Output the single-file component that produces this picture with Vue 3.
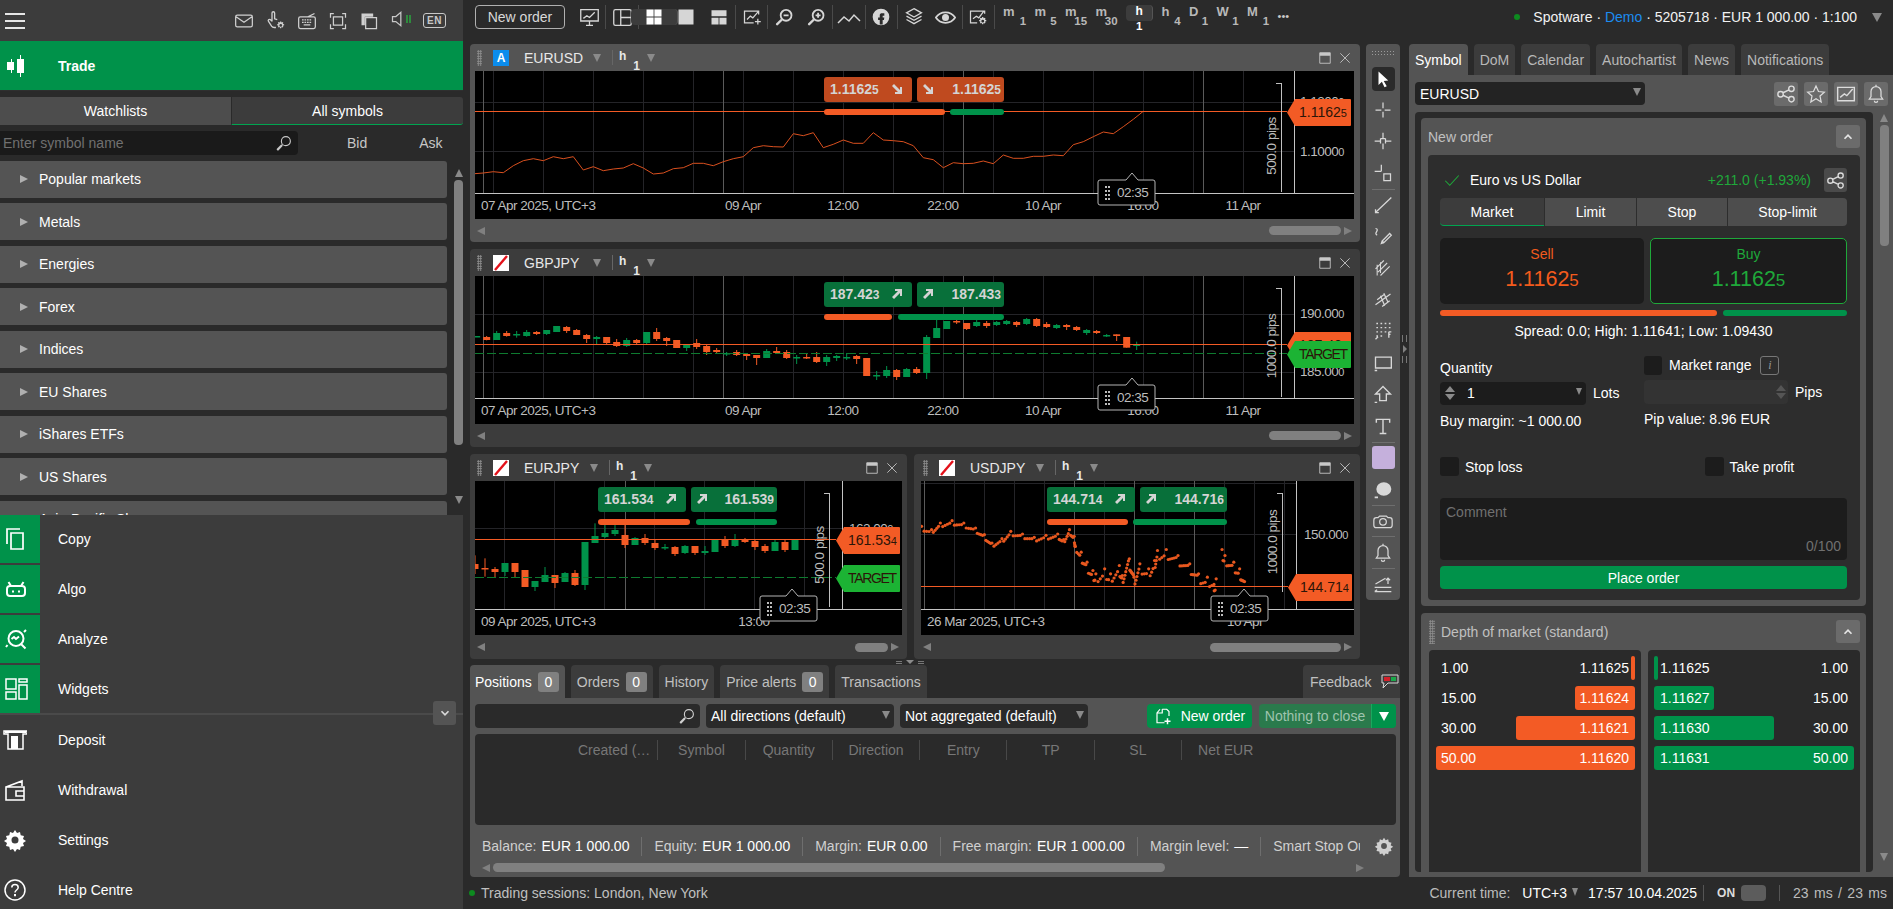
<template>
  <div class="app">
    <!-- left navigation -->
    <aside class="side">
      <div class="side-top">
        <span class="burger"><i></i><i></i><i></i></span>
        <div class="side-top-icons">
          <Icon name="mail" :size="20" />
          <Icon name="touch" :size="21" />
          <Icon name="keyboard" :size="20" />
          <Icon name="fullscreen" :size="20" />
          <Icon name="windows" :size="20" />
          <span class="sound"><Icon name="sound" :size="20" /></span>
          <span class="lang">EN</span>
        </div>
      </div>
      <div class="side-trade">
        <span class="side-ico"><Icon name="candles" :size="24" /></span>
        <b>Trade</b>
      </div>
      <div class="market">
        <div class="market-tabs">
          <div class="mtab">Watchlists</div>
          <div class="mtab active">All symbols</div>
        </div>
        <div class="market-search">
          <div class="search-box">
            <span>Enter symbol name</span>
            <Icon name="search" :size="18" />
          </div>
          <span class="bid">Bid</span>
          <span class="ask">Ask</span>
        </div>
        <div class="market-list">
          <div class="rows">
            <div v-for="r in markets" :key="r" class="mrow"><em class="tri-r"></em>{{ r }}</div>
          </div>
          <div class="vscroll">
            <em class="tri-u"></em>
            <div class="thumb"></div>
            <em class="tri-d"></em>
          </div>
        </div>
      </div>
      <div class="side-menu">
        <div v-for="m in greenMenu" :key="m.label" class="gm">
          <span class="gm-ico"><Icon :name="m.icon" :size="24" /></span>
          <span>{{ m.label }}</span>
        </div>
        <div class="side-div"></div>
        <div v-for="m in plainMenu" :key="m.label" class="pm">
          <span class="pm-ico"><Icon :name="m.icon" :size="24" /></span>
          <span>{{ m.label }}</span>
        </div>
        <button class="side-collapse"><Icon name="chevDown" :size="14" /></button>
      </div>
    </aside>

    <div class="main">
      <!-- top toolbar -->
      <header class="toolbar">
        <button class="new-order">New order</button>
        <div class="tool-strip">
          <span
            v-for="t in toolbarIcons"
            :key="t.icon"
            class="tb"
            :class="{ sep: t.sep }"
          >
            <span class="tb-in" :class="{ on: t.on }"><Icon :name="t.icon" :size="t.size || 20" /></span>
          </span>
        </div>
        <div class="tfs">
          <span
            v-for="t in timeframes"
            :key="t.l + t.n"
            class="tf"
            :class="{ on: t.on }"
            :style="{ width: t.w + 'px' }"
          >
            <b>{{ t.l }}</b><b class="sub">{{ t.n }}</b>
          </span>
          <span class="dots">•••</span>
        </div>
        <div class="account">
          <i class="dot"></i>Spotware · <span class="demo">Demo</span> · 5205718 · EUR 1 000.00 · 1:100
          <em class="tri-d acc-tri"></em>
        </div>
      </header>

      <div class="body">
        <div class="center">
          <div class="workspace">
            <div class="charts">
              <section
                v-for="c in charts"
                :key="c.symbol"
                class="chart-panel"
                :class="[c.cls, { active: c.active }]"
              >
                <div class="chart-head">
                  <span class="grip"></span>
                  <span class="sym-ico" :class="{ auto: c.active }">
                    <template v-if="c.active">A</template>
                    <svg v-else width="16" height="16" viewBox="0 0 16 16"><path d="M2 15L14 1" stroke="#e3111a" stroke-width="2.4" /></svg>
                  </span>
                  <span class="sym-name">{{ c.symbol }}</span>
                  <em class="tri-d"></em>
                  <span class="head-sep"></span>
                  <span class="head-tf"><b>h</b><b class="sub">1</b></span>
                  <em class="tri-d"></em>
                  <span class="head-right">
                    <Icon name="maximize" :size="14" />
                    <Icon name="close" :size="14" />
                  </span>
                </div>
                <svg class="plot" :width="c.w" :height="c.h" :viewBox="`0 0 ${c.w} ${c.h}`">
                  <line v-for="y in c.hgrid" :key="'h' + y" x1="0" :x2="c.axisX" :y1="y" :y2="y" class="grid" />
                  <line v-for="x in c.vgrid" :key="'v' + x" :x1="x" :x2="x" y1="0" :y2="c.axisY" class="grid" />
                  <line v-for="x in c.sessions" :key="'s' + x" :x1="x" :x2="x" y1="0" :y2="c.axisY" class="session" />
                  <line :x1="c.axisX" :x2="c.axisX" y1="0" :y2="c.axisY" class="axis" />
                  <line x1="0" :x2="c.w" :y1="c.axisY" :y2="c.axisY" class="axis" />

                  <polyline v-if="c.line" :points="c.line" class="pline" />
                  <g v-if="c.candles">
                    <g v-for="(k, i) in c.candles" :key="i" :class="k.up ? 'cg' : 'co'">
                      <line :x1="k.x" :x2="k.x" :y1="k.wt" :y2="k.wb" />
                      <rect :x="k.x - 3.5" :y="k.top" width="7" :height="k.h" />
                    </g>
                  </g>
                  <g v-if="c.dots" class="scatter">
                    <circle v-for="(d, i) in c.dots" :key="i" :cx="d[0]" :cy="d[1]" r="1.6" />
                  </g>

                  <line x1="0" :x2="c.tagX" :y1="c.bidY" :y2="c.bidY" class="bid-line" />
                  <line v-if="c.targetY" x1="0" :x2="c.tagX" :y1="c.targetY" :y2="c.targetY" class="target-line" />

                  <text v-for="p in c.prices" :key="p.t" :x="c.priceX" :y="p.y + 5" class="ax">{{ p.t }}<tspan font-size="11">{{ p.s }}</tspan></text>
                  <text v-for="l in c.xLabels" :key="l.t" :x="l.x" :y="c.axisY + 17" class="ax" :text-anchor="l.a || 'middle'">{{ l.t }}</text>

                  <!-- distance ruler -->
                  <path :d="`M${c.ruler.x - 5} ${c.ruler.y1}H${c.ruler.x}V${c.ruler.y2}`" class="ruler" />
                  <text class="ax" text-anchor="middle" :transform="`translate(${c.ruler.x - 5} ${c.ruler.mid}) rotate(-90)`">{{ c.ruler.t }}</text>

                  <!-- price tags -->
                  <g v-for="g in c.tags" :key="g.t">
                    <path :d="tagPath(c.tagX, g.y)" :fill="g.fill" />
                    <text :x="c.tagX + 12" :y="g.y + 18" class="tag-text" :textLength="g.big ? 49 : null">{{ g.t }}<tspan font-size="11">{{ g.s }}</tspan></text>
                  </g>

                  <!-- quick trade buttons -->
                  <g class="quick">
                    <rect :x="c.sell.x" y="6" :width="c.sell.w" height="25" rx="3" :fill="c.btn" />
                    <text :x="c.sell.x + 6" y="23" class="q-text">{{ c.sell.t }}<tspan font-size="12">{{ c.sell.s }}</tspan></text>
                    <path :d="arrowPath(c.sell.x + c.sell.w - 15, 18, c.down)" class="q-arrow" />
                    <rect :x="c.buy.x" y="6" :width="c.buy.w" height="25" rx="3" :fill="c.btn" />
                    <text :x="c.buy.x + c.buy.w - 3" y="23" class="q-text" text-anchor="end">{{ c.buy.t }}<tspan font-size="12">{{ c.buy.s }}</tspan></text>
                    <path :d="arrowPath(c.buy.x + 11, 18, c.down)" class="q-arrow" />
                    <rect :x="c.sell.x" y="38" :width="c.sellBar" height="6" rx="3" class="bar-o" />
                    <rect :x="c.greenBar[0]" y="38" :width="c.greenBar[1]" height="6" rx="3" class="bar-g" />
                  </g>

                  <!-- candle countdown -->
                  <g :transform="`translate(${c.timer} ${c.axisY - 13})`">
                    <path :d="timerPath(c.timerArrow)" class="timer" />
                    <g class="timer-grip">
                      <rect v-for="d in timerDots" :key="d[0] + '-' + d[1]" :x="d[0]" :y="d[1]" width="2" height="2" />
                    </g>
                    <text x="19" y="17" class="ax">02:35</text>
                  </g>
                </svg>
                <div class="chart-scroll">
                  <em class="tri-l"></em>
                  <span class="cs-track"><span class="cs-thumb" :style="{ width: c.thumb + 'px' }"></span></span>
                  <em class="tri-r"></em>
                </div>
              </section>
            </div>

            <div class="draw-tools">
              <div class="tools-grip"></div>
              <button class="cursor-tool"><Icon name="cursor" :size="18" /></button>
              <div v-for="t in drawTools" :key="t.icon" class="dtool" :class="{ sep: t.sep }">
                <span v-if="t.icon === 'swatch'" class="swatch"></span>
                <Icon v-else :name="t.icon" :size="20" />
              </div>
            </div>
          </div>

          <div class="split-h"><i></i><em class="tri-d"></em><i></i></div>

          <!-- positions panel -->
          <section class="bottom">
            <div class="btabs">
              <div v-for="t in bottomTabs" :key="t.label" class="btab" :class="{ active: t.active }">
                {{ t.label }}<span v-if="t.badge !== undefined" class="badge">{{ t.badge }}</span>
              </div>
              <div class="btab feedback">
                Feedback
                <svg width="18" height="16" viewBox="0 0 18 16">
                  <path d="M1 1h16v8H7l-5 5 1-5H1z" fill="none" stroke="#d8d8d8" stroke-width="1" />
                  <rect x="3" y="3" width="6" height="4" fill="#d3202a" />
                  <rect x="10" y="3" width="5" height="4" fill="#1aa84a" />
                </svg>
              </div>
            </div>
            <div class="bpanel">
              <div class="filters">
                <div class="f-search"><Icon name="search" :size="18" /></div>
                <div class="f-select">All directions (default)<em class="tri-d"></em></div>
                <div class="f-select">Not aggregated (default)<em class="tri-d"></em></div>
                <button class="f-new"><Icon name="newDoc" :size="18" />New order</button>
                <div class="f-close">
                  <span>Nothing to close</span>
                  <i><em class="tri-d white"></em></i>
                </div>
              </div>
              <div class="table">
                <div class="thead">
                  <span v-for="h in columns" :key="h">{{ h }}</span>
                </div>
              </div>
              <div class="summary">
                <div class="sum-items">
                  <span v-for="s in summary" :key="s.label" class="sum">
                    {{ s.label }}<b v-if="s.value">{{ s.value }}</b>
                  </span>
                </div>
                <Icon name="gear" :size="20" />
              </div>
              <div class="hscroll">
                <em class="tri-l"></em>
                <span class="hs-track"><span class="hs-thumb"></span></span>
                <em class="tri-r"></em>
              </div>
            </div>
          </section>
        </div>

        <div class="split-v"><i></i><em class="tri-r"></em><i></i></div>

        <!-- symbol panel -->
        <section class="right">
          <div class="rtabs">
            <div v-for="(t, i) in rightTabs" :key="t" class="rtab" :class="{ active: i === 0 }">{{ t }}</div>
          </div>
          <div class="rpanel">
            <div class="sym-bar">
              <div class="sym-select">EURUSD<em class="tri-d"></em></div>
              <div class="sym-btns">
                <button><Icon name="share" :size="20" /></button>
                <button><Icon name="star" :size="20" /></button>
                <button><Icon name="chartBox" :size="20" /></button>
                <button><Icon name="bell" :size="20" /></button>
              </div>
            </div>
            <div class="rcontent">
              <div class="rcards">
                <div class="card">
                  <div class="card-head">
                    <span>New order</span>
                    <button class="collapse"><Icon name="chevUp" :size="14" /></button>
                  </div>
                  <div class="order">
                    <div class="o-title">
                      <Icon name="check" :size="18" />
                      <span class="o-name">Euro vs US Dollar</span>
                      <span class="o-change">+211.0 (+1.93%)</span>
                      <button class="o-share"><Icon name="share" :size="19" /></button>
                    </div>
                    <div class="o-tabs">
                      <div class="active">Market</div>
                      <div>Limit</div>
                      <div>Stop</div>
                      <div>Stop-limit</div>
                    </div>
                    <div class="o-prices">
                      <div class="pbox sell">
                        <span>Sell</span>
                        <strong>1.1162<small>5</small></strong>
                      </div>
                      <div class="pbox buy">
                        <span>Buy</span>
                        <strong>1.1162<small>5</small></strong>
                      </div>
                    </div>
                    <div class="o-bars"><i class="b-o"></i><i class="b-g"></i></div>
                    <div class="o-spread">Spread: 0.0; High: 1.11641; Low: 1.09430</div>
                    <div class="o-form">
                      <div class="col-l">
                        <label>Quantity</label>
                        <div class="qty-row">
                          <div class="qty"><span class="spin"></span><span class="qty-val">1</span><em class="tri-d"></em></div>
                          <span>Lots</span>
                        </div>
                        <p>Buy margin: ~1 000.00</p>
                      </div>
                      <div class="col-r">
                        <div class="range"><span class="cb"></span>Market range<span class="info">i</span></div>
                        <div class="qty-row">
                          <div class="pips"><span class="spin"></span></div>
                          <span>Pips</span>
                        </div>
                        <p>Pip value: 8.96 EUR</p>
                      </div>
                    </div>
                    <div class="o-checks">
                      <div class="chk"><span class="cb"></span>Stop loss</div>
                      <div class="chk tp"><span class="cb"></span>Take profit</div>
                    </div>
                    <div class="comment">
                      <span>Comment</span>
                      <span class="count">0/100</span>
                    </div>
                    <button class="place">Place order</button>
                  </div>
                </div>
                <div class="card dom">
                  <div class="card-head">
                    <span class="grip"></span>
                    <span class="dom-title">Depth of market (standard)</span>
                    <button class="collapse"><Icon name="chevUp" :size="14" /></button>
                  </div>
                  <div class="dom-cols">
                    <div class="dom-col">
                      <div v-for="r in domSell" :key="r.price" class="dom-row sell">
                        <i :style="{ width: r.bar + 'px' }"></i>
                        <span>{{ r.qty }}</span><span>{{ r.price }}</span>
                      </div>
                    </div>
                    <div class="dom-col">
                      <div v-for="r in domBuy" :key="r.price" class="dom-row buy">
                        <i :style="{ width: r.bar + 'px' }"></i>
                        <span>{{ r.price }}</span><span>{{ r.qty }}</span>
                      </div>
                    </div>
                  </div>
                </div>
              </div>
              <div class="vscroll wide">
                <em class="tri-u"></em>
                <div class="thumb"></div>
                <em class="tri-d"></em>
              </div>
            </div>
          </div>
        </section>
      </div>

      <footer class="status">
        <i class="dot"></i>
        <span class="sessions">Trading sessions: London, New York</span>
        <div class="status-right">
          <span class="muted">Current time:</span>
          <span class="utc">UTC+3<em class="tri-d"></em></span>
          <span class="clock">17:57 10.04.2025</span>
          <span class="on"><b>ON</b><i></i></span>
          <span class="muted ms">23 ms / 23 ms</span>
        </div>
      </footer>
    </div>
  </div>
</template>

<script setup>
import { h } from 'vue'

const icons = {
  mail: { s: 'M4 5h16a2 2 0 0 1 2 2v10a2 2 0 0 1-2 2H4a2 2 0 0 1-2-2V7a2 2 0 0 1 2-2z M2.5 7l9.5 6.5L21.500 7' },
  touch: { s: 'M8 13V3.500a1.500 1.500 0 0 1 3 0V10l3 1 M8 13l-2-2c-1.500-1-3 .5-2 2l3.500 5.500c.7 1 1.500 1.500 3 1.500h2', f: 'M17.500 13l1 0 .4 1.400 1.300-.6.800.8-.6 1.300 1.500.4v1.200l-1.500.4.6 1.300-.8.8-1.300-.6-.4 1.500h-1.200l-.4-1.500-1.300.6-.8-.8.6-1.300-1.500-.4v-1.200l1.500-.4-.6-1.300.8-.8 1.300.6.4-1.400zM18 16a1.600 1.600 0 1 0 0 3.200 1.600 1.600 0 0 0 0-3.200z' },
  keyboard: { s: 'M4 7h16a2 2 0 0 1 2 2v10a2 2 0 0 1-2 2H4a2 2 0 0 1-2-2V9a2 2 0 0 1 2-2z M13 7l8-4', f: 'M6 10h2v1.500H6zM9 10h2v1.500H9zM12 10h2v1.500h-2zM15 10h2v1.500h-2zM6 13h2v1.500H6zM9 13h2v1.500H9zM12 13h2v1.500h-2zM15 13h2v1.500h-2zM8 16h8v1.500H8z' },
  fullscreen: { s: 'M3 8V3h4 M17 3h4v5 M21 16v5h-4 M7 21H3v-5 M6.500 7h11v10h-11z' },
  windows: { s: 'M8 8h13v13H8z', f: 'M3 3h14v4H7v10H3z' },
  sound: { s: 'M3 9h4l6-5v16l-6-5H3z' },
  candles: { f: 'M7 5h1v3h2v8H8v3H7v-3H3V8h4zM16 1h1v4h3v14h-3v4h-1v-4h-3V5h3z' },
  search: { s: 'M14.500 3.500a6 6 0 1 0 0 12 6 6 0 0 0 0-12z', f: 'M8.500 13.500l2 2-6 6.500c-1 .8-3-1-2-2.200z' },
  copy: { s: 'M7 6h12v16H7z M3 17V2h13', w: 1.700 },
  algo: { s: 'M6 9h12a3 3 0 0 1 3 3v4a3 3 0 0 1-3 3H6a3 3 0 0 1-3-3v-4a3 3 0 0 1 3-3z M7 9L4.500 5 M17 9l2.500-4 M8 14.500h2 M14 14.500h2', w: 2 },
  analyze: { s: 'M12 4a7.500 7.500 0 1 0 0 15 7.500 7.500 0 0 0 0-15z M17.500 17.500l4 4 M7.500 12l2.500-2 2 2 3-2.500 M2 20l1.500-2 M20 5l2-2', w: 2 },
  widgets: { s: 'M2 2h10v10H2z M15 2h8v3h-8z M15 8h8v14h-8z M2 15h10v7H2z' },
  deposit: { s: 'M1 3h23v3H20v15H5V6H1z', f: 'M8 8h7v13H8zM2 3h21v2H2z' },
  wallet: { s: 'M3 9h18v13H3z M3 9l16-6v5 M13 13h8v5h-8z', w: 1.600 },
  gear: { f: 'M12 2l2 3 3-1 .7 3.300 3.300.7-1 3 3 2-3 2 1 3-3.300.7L17 22l-3-1-2 3-2-3-3 1-.7-3.300L3 18l1-3-3-2 3-2-1-3 3.300-.7L7 4l3 1zm0 6.500a3.500 3.500 0 1 0 0 7 3.500 3.500 0 0 0 0-7z' },
  help: { s: 'M12 2a10 10 0 1 0 0 20 10 10 0 0 0 0-20z M8.800 9.500c0-4 6.400-4 6.400 0 0 2.500-3.200 2.500-3.200 5', f: 'M11 16h2v2.200h-2z', w: 1.500 },
  chevDown: { s: 'M6 9l6 6 6-6', w: 3 },
  chevUp: { s: 'M6 15l6-6 6 6', w: 3 },
  monitor: { s: 'M2 3h20v13H2z M8 21h8 M12 16v5 M5 13l4-3 3 2 6-6', w: 1.500 },
  layout: { s: 'M4 3h16a2 2 0 0 1 2 2v14a2 2 0 0 1-2 2H4a2 2 0 0 1-2-2V5a2 2 0 0 1 2-2z M10 3v18 M10 12h12' },
  grid4: { f: 'M3 3h8.500v8.500H3zM12.500 3H21v8.500h-8.500zM3 12.500h8.500V21H3zM12.500 12.500H21V21h-8.500z' },
  square: { f: 'M3 3h18v18H3z' },
  tpl: { f: 'M3 4h18v7H3zM3 13h8.500v8H3zM12.500 13H21v8h-8.500z' },
  chartPlus: { s: 'M20 9v-4H3v14h11 M6 15l4-4 3 2 7-8 M19 14v7 M15.500 17.500h7' },
  zoomOut: { s: 'M14.500 3.500a6.500 6.500 0 1 0 0 13 6.500 6.500 0 0 0 0-13z M11.500 10h6', f: 'M8.500 14l2 2-6 6c-1 .8-3-1-2-2.200z', w: 2.200 },
  zoomIn: { s: 'M14.500 3.500a6.500 6.500 0 1 0 0 13 6.500 6.500 0 0 0 0-13z M11.500 10h6 M14.500 7v6', f: 'M8.500 14l2 2-6 6c-1 .8-3-1-2-2.200z', w: 2.200 },
  lineChart: { s: 'M1 18l6-6 5 4 5-6 6 6' },
  fb: { f: 'M12 2a10 10 0 1 0 0 20 10 10 0 0 0 0-20zm1.500 5.500h2.500v3h-2v2h2l-.5 3h-1.500V21h-3.500v-5.500h-2v-3h2V10c0-1.800 1-2.500 3-2.500z' },
  layers: { s: 'M12 2l9 5-9 5-9-5z M3 11l9 5 9-5 M3 15l9 5 9-5' },
  eye: { s: 'M1 12c5-8 17-8 22 0-5 8-17 8-22 0z', f: 'M12 8a4 4 0 1 0 0 8 4 4 0 0 0 0-8z', w: 2 },
  chartGear: { s: 'M20 8V5H3v14h8 M6 14l4-3 3 2 6-8', f: 'M17 12l1.300 0 .4 1.500 1.300-.6 1 1-.6 1.300 1.500.4v1.400l-1.500.4.6 1.300-1 1-1.300-.6-.4 1.500H17l-.4-1.500-1.300.6-1-1 .6-1.300-1.500-.4v-1.400l1.500-.4-.6-1.300 1-1 1.300.6zm.7 3.300a1.700 1.700 0 1 0 0 3.400 1.700 1.700 0 0 0 0-3.400z' },
  maximize: { s: 'M3 3h18v18H3z', f: 'M3 3h18v5H3z' },
  close: { s: 'M4 4l16 16 M20 4L4 20', w: 1.500 },
  cursor: { f: 'M6 2l13 12-6 .5 4 7-3 1.500-3.500-7.500L6 20z' },
  cross: { s: 'M12 3v7 M12 14v7 M3 12h7 M14 12h7' },
  crossDense: { s: 'M12 2v7 M12 15v7 M2 12h7 M15 12h7 M9 9v6 M15 9v6 M9 9h6' },
  crossBox: { s: 'M10 2v8 M2 10h8 M13 13h8v8h-8z' },
  trendLine: { s: 'M3 21L22 3 M3 17v4h4' },
  pen: { s: 'M13 20l-2-2 9-9 2 2z M11 18l-1 3 3-1 M3 3c6 1-3 6 2 8' },
  fib: { s: 'M3 13L13 3 M6 17L17 6 M9 21L20 10 M5 8v13 M9 5v13', w: 1.300 },
  fork: { s: 'M3 19L21 6 M5 13l8-6 M11 21l9-7 M9 8l5 12 M13 5l5 11' },
  gridF: { s: 'M4 3h2 M9 3h2 M14 3h2 M19 3h2 M4 8h2 M9 8h2 M14 8h2 M19 8h2 M4 13h2 M9 13h2 M14 13h2 M4 18h2 M9 18h2 M3 22l3-3 M19 13v7 M19 13h3 M19 16h2', w: 1.600 },
  rect: { s: 'M3 5h19v13H3z M2 21h3', w: 1.600 },
  arrowUp: { s: 'M12 3l9 9h-5v8H8v-8H3z M2 22h3', w: 1.600 },
  textT: { s: 'M4 8V4h16v4 M12 4v17 M8 21h8', w: 1.700 },
  brush: { f: 'M13 4a9 8 0 1 1 0 16 9 8 0 0 1 0-16z M2 21h4v2H2z' },
  camera: { s: 'M8 6h8l2 2h2a3 3 0 0 1 3 3v6a3 3 0 0 1-3 3H4a3 3 0 0 1-3-3v-6a3 3 0 0 1 3-3h2z M12 9a4 4 0 1 0 0 8 4 4 0 0 0 0-8z' },
  bell: { s: 'M12 3a6 6 0 0 0-6 6v6l-2 3h16l-2-3V9a6 6 0 0 0-6-6z M10 20a2 2 0 0 0 4 0 M12 1v2' },
  trendList: { s: 'M3 12L15 5 M2 16h20 M2 21h20 M18 12V5 M15.500 7.500L18 5l2.500 2.500 M2 21l3-2', w: 1.500 },
  share: { s: 'M18.500 2.500a3 3 0 1 0 0 6.500 3 3 0 0 0 0-6.500z M18.500 15a3 3 0 1 0 0 6.500 3 3 0 0 0 0-6.500z M5.500 9a3 3 0 1 0 0 6.500 3 3 0 0 0 0-6.500z M8.500 10.500l7-3.500 M8.500 13.500l7 3.500', w: 1.700 },
  star: { s: 'M12 2.500l3 6.500 7 .8-5.200 4.700 1.400 7L12 17.800l-6.200 3.700 1.400-7L2 9.800 9 9z' },
  chartBox: { s: 'M2 4h20v16H2z M5 16l5-4 3 2 7-8', w: 1.700 },
  check: { s: 'M3 13l6 6L21 6', w: 1.400 },
  newDoc: { s: 'M11 3h6l3 3v6 M8 3L4 8v13h10 M11 3v5H4', f: 'M17 15h2v3h3v2h-3v3h-2v-3h-3v-2h3z', w: 1.600 }
}

const Icon = (props) => {
  const i = icons[props.name]
  const kids = []
  if (i.s) kids.push(h('path', { d: i.s, fill: 'none', stroke: 'currentColor', 'stroke-width': i.w || 1.5 }))
  if (i.f) kids.push(h('path', { d: i.f, fill: 'currentColor' }))
  return h('svg', { width: props.size, height: props.size, viewBox: '0 0 24 24' }, kids)
}
Icon.props = ['name', 'size']

const markets = ['Popular markets', 'Metals', 'Energies', 'Forex', 'Indices', 'EU Shares', 'iShares ETFs', 'US Shares', 'Asia-Pacific Shares']

const greenMenu = [
  { label: 'Copy', icon: 'copy' },
  { label: 'Algo', icon: 'algo' },
  { label: 'Analyze', icon: 'analyze' },
  { label: 'Widgets', icon: 'widgets' }
]
const plainMenu = [
  { label: 'Deposit', icon: 'deposit' },
  { label: 'Withdrawal', icon: 'wallet' },
  { label: 'Settings', icon: 'gear' },
  { label: 'Help Centre', icon: 'help' }
]

const toolbarIcons = [
  { icon: 'monitor', size: 21 },
  { icon: 'layout', sep: true, size: 21 },
  { icon: 'grid4', sep: true, on: true },
  { icon: 'square' },
  { icon: 'tpl' },
  { icon: 'chartPlus', sep: true },
  { icon: 'zoomOut', sep: true },
  { icon: 'zoomIn' },
  { icon: 'lineChart', sep: true, size: 24 },
  { icon: 'fb', sep: true },
  { icon: 'layers', sep: true },
  { icon: 'eye', size: 21 },
  { icon: 'chartGear', sep: true }
]

const timeframes = [
  { l: 'm', n: '1', w: 23 }, { l: 'm', n: '5', w: 22 }, { l: 'm', n: '15', w: 22 }, { l: 'm', n: '30', w: 22 },
  { l: 'h', n: '1', w: 19, on: true }, { l: 'h', n: '4', w: 19 }, { l: 'D', n: '1', w: 19 }, { l: 'W', n: '1', w: 22 }, { l: 'M', n: '1', w: 22 }
]

const drawTools = [
  { icon: 'cross' }, { icon: 'crossDense' }, { icon: 'crossBox' },
  { icon: 'trendLine', sep: true }, { icon: 'pen' }, { icon: 'fib' }, { icon: 'fork' },
  { icon: 'gridF' }, { icon: 'rect' }, { icon: 'arrowUp' }, { icon: 'textT' },
  { icon: 'swatch', sep: true }, { icon: 'brush' },
  { icon: 'camera', sep: true }, { icon: 'bell', sep: true }, { icon: 'trendList', sep: true }
]

const bottomTabs = [
  { label: 'Positions', badge: 0, active: true },
  { label: 'Orders', badge: 0 },
  { label: 'History' },
  { label: 'Price alerts', badge: 0 },
  { label: 'Transactions' }
]
const columns = ['Created (…', 'Symbol', 'Quantity', 'Direction', 'Entry', 'TP', 'SL', 'Net EUR']
const summary = [
  { label: 'Balance:', value: 'EUR 1 000.00' },
  { label: 'Equity:', value: 'EUR 1 000.00' },
  { label: 'Margin:', value: 'EUR 0.00' },
  { label: 'Free margin:', value: 'EUR 1 000.00' },
  { label: 'Margin level:', value: '—' },
  { label: 'Smart Stop Out' }
]
const rightTabs = ['Symbol', 'DoM', 'Calendar', 'Autochartist', 'News', 'Notifications']

const domSell = [
  { qty: '1.00', price: '1.11625', bar: 4 },
  { qty: '15.00', price: '1.11624', bar: 60 },
  { qty: '30.00', price: '1.11621', bar: 119 },
  { qty: '50.00', price: '1.11620', bar: 199 }
]
const domBuy = [
  { qty: '1.00', price: '1.11625', bar: 4 },
  { qty: '15.00', price: '1.11627', bar: 60 },
  { qty: '30.00', price: '1.11630', bar: 120 },
  { qty: '50.00', price: '1.11631', bar: 200 }
]

// chart drawing helpers
const tagPath = (x, y) => `M${x} ${y + 13.500}L${x + 8} ${y}H${x + 63}a1 1 0 0 1 1 1V${y + 26}a1 1 0 0 1-1 1H${x + 8}Z`
const arrowPath = (x, y, down) =>
  down
    ? `M${x - 3} ${y - 5}L${x + 3} ${y + 1}V${y - 2}l2 0V${y + 5}H${x - 2}V${y + 3}h3L${x - 5} ${y - 3}Z`
    : `M${x - 5} ${y + 3}L${x + 1} ${y - 3}H${x - 2}V${y - 5}H${x + 5}V${y + 2}H${x + 3}V${y - 1}L${x - 3} ${y + 5}Z`
const timerPath = (a) => `M2 0H${a - 6}L${a} -7L${a + 6} 0H55a2 2 0 0 1 2 2V23a2 2 0 0 1-2 2H2a2 2 0 0 1-2-2V2a2 2 0 0 1 2-2Z`
const timerDots = [[7, 6], [10, 6], [7, 10], [10, 10], [7, 14], [10, 14], [7, 18], [10, 18]]

const range = (from, step, n) => Array.from({ length: n }, (_, i) => from + i * step)

// EURUSD line, y values read off the reference
const eurusdY = [519, 515, 518, 497, 482, 476, 482, 470, 476, 470, 510, 500, 512, 507, 504, 491, 504, 522, 519, 506, 503, 490, 490, 497, 485, 476, 470, 443, 437, 440, 441, 401, 407, 398, 443, 433, 420, 430, 430, 398, 420, 422, 425, 437, 473, 479, 503, 488, 491, 490, 483, 491, 465, 475, 475, 469, 469, 465, 467, 434, 425, 410, 396, 401, 380, 358, 334]
const eurusdLine = '0,' + (521 / 3 - 71) + ' ' + eurusdY.map((y, i) => `${(8.33 + i * 10).toFixed(1)},${(y / 3 - 71).toFixed(1)}`).join(' ')

const makeCandles = (rows, x0) =>
  rows.map((r, i) => {
    const top = r[0] / 3 - 31
    const bot = r[1] / 3 - 31
    return {
      x: x0 + i * 10,
      top,
      h: Math.max(bot - top, 1.500),
      wt: r[2] / 3 - 31,
      wb: r[3] / 3 - 31,
      up: r[4] === 'g'
    }
  })

const gbpjpy = [
  [273, 275, 273, 275, 'g'], [276, 285, 273, 286, 'o'], [264, 285, 258, 285, 'g'], [264, 273, 258, 275, 'o'],
  [267, 270, 258, 278, 'g'], [261, 273, 255, 275, 'g'], [261, 267, 258, 270, 'o'], [255, 267, 255, 270, 'g'],
  [243, 261, 243, 261, 'g'], [246, 258, 243, 264, 'o'], [255, 270, 252, 270, 'o'], [270, 282, 267, 294, 'o'],
  [276, 282, 273, 297, 'g'], [276, 294, 276, 297, 'o'], [291, 303, 282, 306, 'o'], [285, 303, 279, 306, 'g'],
  [285, 294, 282, 297, 'o'], [261, 294, 261, 300, 'g'], [261, 282, 249, 288, 'o'], [279, 288, 276, 303, 'o'],
  [285, 309, 285, 309, 'o'], [300, 309, 297, 318, 'g'], [294, 306, 282, 312, 'o'], [303, 321, 297, 330, 'o'],
  [315, 321, 309, 324, 'o'], [324, 327, 321, 333, 'g'], [321, 330, 315, 333, 'o'], [327, 333, 327, 345, 'o'],
  [330, 339, 330, 360, 'o'], [318, 339, 312, 339, 'g'], [318, 324, 306, 327, 'o'], [321, 339, 315, 342, 'o'],
  [336, 339, 330, 357, 'g'], [336, 339, 324, 342, 'o'], [336, 351, 321, 354, 'o'], [336, 351, 330, 363, 'g'],
  [333, 339, 330, 348, 'g'], [336, 339, 324, 345, 'g'], [333, 342, 330, 357, 'o'], [339, 393, 339, 393, 'o'],
  [390, 393, 378, 405, 'g'], [375, 393, 363, 399, 'g'], [375, 396, 372, 405, 'o'], [372, 396, 369, 396, 'g'],
  [372, 384, 366, 387, 'o'], [276, 384, 270, 402, 'g'], [249, 279, 225, 279, 'g'], [228, 252, 228, 252, 'g'],
  [228, 231, 222, 237, 'o'], [234, 252, 234, 255, 'o'], [231, 243, 222, 246, 'g'], [234, 243, 228, 249, 'o'],
  [231, 240, 228, 243, 'g'], [228, 237, 225, 240, 'g'], [231, 240, 228, 246, 'o'], [222, 237, 219, 240, 'g'],
  [222, 243, 219, 246, 'o'], [237, 246, 231, 249, 'o'], [240, 249, 237, 252, 'g'], [240, 246, 237, 255, 'o'],
  [246, 255, 243, 258, 'o'], [255, 264, 252, 270, 'g'], [258, 264, 255, 267, 'o'], [270, 273, 267, 276, 'g'],
  [268, 273, 268, 288, 'o'], [276, 308, 276, 308, 'o'], [297, 303, 290, 315, 'g']
]

const eurjpy = [
  [342, 357, 316, 372, 'o'], [354, 358, 325, 380, 'o'], [357, 366, 351, 381, 'o'], [339, 366, 339, 378, 'g'],
  [339, 366, 339, 381, 'o'], [360, 411, 360, 411, 'o'], [393, 411, 393, 423, 'g'], [375, 396, 351, 396, 'g'],
  [375, 399, 375, 414, 'o'], [369, 396, 366, 396, 'g'], [369, 405, 360, 408, 'o'], [276, 405, 276, 420, 'g'],
  [258, 279, 220, 279, 'g'], [249, 261, 225, 264, 'g'], [240, 252, 225, 258, 'g'], [255, 285, 225, 294, 'o'],
  [264, 285, 261, 285, 'g'], [264, 279, 252, 285, 'o'], [279, 294, 270, 300, 'o'], [291, 294, 282, 300, 'g'],
  [291, 312, 288, 318, 'o'], [288, 309, 285, 312, 'g'], [288, 309, 288, 315, 'o'], [303, 309, 288, 315, 'g'],
  [270, 306, 267, 306, 'g'], [270, 288, 258, 294, 'o'], [267, 288, 252, 291, 'g'], [267, 276, 264, 279, 'o'],
  [273, 291, 267, 300, 'o'], [288, 303, 282, 309, 'o'], [276, 303, 270, 303, 'g'], [276, 300, 270, 306, 'o'],
  [270, 300, 267, 300, 'g']
]

// USDJPY is a dot chart: walk the outline and scatter points along it
const usdOutline = [[778, 235], [795, 245], [810, 225], [830, 218], [850, 225], [870, 240], [885, 260], [898, 285], [915, 272], [930, 250], [950, 258], [970, 268], [990, 262], [1010, 258], [1020, 275], [1030, 245], [1038, 265], [1040, 295], [1050, 320], [1060, 350], [1070, 375], [1075, 385], [1090, 370], [1100, 385], [1115, 360], [1120, 390], [1132, 340], [1140, 395], [1150, 355], [1165, 370], [1175, 345], [1180, 315], [1195, 312], [1215, 330], [1235, 355], [1250, 385], [1265, 395], [1280, 400], [1275, 420]]
const usdTail = [[1290, 312], [1295, 330], [1310, 350], [1320, 370], [1330, 405]]
const scatter = (pts) => {
  const out = []
  for (let i = 0; i < pts.length - 1; i++) {
    const [ax, ay] = pts[i]
    const [bx, by] = pts[i + 1]
    const n = Math.max(3, Math.round(Math.hypot(bx - ax, (by - ay) / 1.700) / 4))
    // the falling part of the series is much noisier than the start
    const spread = pts[i][0] > 1040 ? 4.500 : 2
    for (let j = 0; j < n; j++) {
      const t = j / n
      const jit = (((i * 7 + j * 13) % 7) - 3) * spread
      out.push([(ax + (bx - ax) * t) / 1.704 - 456, (ay + (by - ay) * t + jit) / 3 - 31])
    }
  }
  return out
}

const greenBtn = '#08703a'
const orange = '#f35b25'
const targetGreen = '#1cb334'

const wideGrid = range(18, 50, 16)
const wideLabels = () => [
  { x: 6, a: 'start', t: '07 Apr 2025, UTC+3' },
  { x: 268, t: '09 Apr' },
  { x: 368, t: '12:00' },
  { x: 468, t: '22:00' },
  { x: 568, t: '10 Apr' },
  { x: 668, t: '16:00' },
  { x: 768, t: '11 Apr' }
]

const charts = [
  {
    symbol: 'EURUSD', active: true, cls: 'wide', w: 879, h: 148, axisX: 819, axisY: 122, priceX: 825, tagX: 812, bidY: 40,
    hgrid: [31, 80], vgrid: wideGrid, sessions: [8, 248, 488, 728], line: eurusdLine,
    prices: [{ y: 30, t: '1.1200', s: '0' }, { y: 80, t: '1.1000', s: '0' }],
    xLabels: wideLabels(),
    ruler: { x: 806, y1: 12, y2: 121, mid: 75, t: '500.0 pips' },
    tags: [{ y: 28, t: '1.1162', s: '5', fill: orange }],
    btn: '#bf4a1f', down: true,
    sell: { x: 349, w: 88, t: '1.1162', s: '5' }, buy: { x: 442, w: 87, t: '1.1162', s: '5' },
    sellBar: 121, greenBar: [475, 54], timer: 623, timerArrow: 34, thumb: 72
  },
  {
    symbol: 'GBPJPY', cls: 'wide', w: 879, h: 148, axisX: 819, axisY: 122, priceX: 825, tagX: 812, bidY: 68, targetY: 77,
    hgrid: [38, 96], vgrid: wideGrid, sessions: [8, 248, 488, 728], candles: makeCandles(gbpjpy, 1.670),
    prices: [{ y: 37, t: '190.00', s: '0' }, { y: 95, t: '185.00', s: '0' }],
    xLabels: wideLabels(),
    ruler: { x: 806, y1: 12, y2: 121, mid: 70, t: '1000.0 pips' },
    tags: [{ y: 56, t: '187.42', s: '3', fill: orange }, { y: 65, t: 'TARGET', s: '', fill: targetGreen, big: true }],
    btn: greenBtn, sell: { x: 349, w: 88, t: '187.42', s: '3' }, buy: { x: 442, w: 87, t: '187.43', s: '3' },
    sellBar: 68, greenBar: [423, 106], timer: 623, timerArrow: 34, thumb: 72
  },
  {
    symbol: 'EURJPY', cls: 'half-l', w: 427, h: 154, axisX: 367, axisY: 128, priceX: 374, tagX: 361, bidY: 58, targetY: 96,
    hgrid: [47], vgrid: range(29, 50, 7), sessions: [150], candles: makeCandles(eurjpy, 0),
    prices: [{ y: 47, t: '162.00', s: '0' }],
    xLabels: [{ x: 6, a: 'start', t: '09 Apr 2025, UTC+3' }, { x: 279, t: '13:00' }],
    ruler: { x: 354, y1: 12, y2: 126, mid: 74, t: '500.0 pips' },
    tags: [{ y: 46, t: '161.53', s: '4', fill: orange }, { y: 84, t: 'TARGET', s: '', fill: targetGreen, big: true }],
    btn: greenBtn, sell: { x: 123, w: 88, t: '161.53', s: '4' }, buy: { x: 216, w: 86, t: '161.53', s: '9' },
    sellBar: 92, greenBar: [221, 81], timer: 285, timerArrow: 32, thumb: 33
  },
  {
    symbol: 'USDJPY', cls: 'half-r', w: 433, h: 154, axisX: 375, axisY: 128, priceX: 383, tagX: 367, bidY: 105,
    hgrid: [2, 53], vgrid: range(3, 30, 13), sessions: [3, 153, 213, 273], dots: [...scatter(usdOutline), ...scatter(usdTail)],
    prices: [{ y: 53, t: '150.00', s: '0' }],
    xLabels: [{ x: 6, a: 'start', t: '26 Mar 2025, UTC+3' }, { x: 324, t: '10 Apr' }],
    ruler: { x: 361, y1: 12, y2: 111, mid: 61, t: '1000.0 pips' },
    tags: [{ y: 93, t: '144.71', s: '4', fill: orange }],
    btn: greenBtn, sell: { x: 126, w: 88, t: '144.71', s: '4' }, buy: { x: 219, w: 87, t: '144.71', s: '6' },
    sellBar: 81, greenBar: [212, 94], timer: 290, timerArrow: 33, thumb: 131
  }
]
</script>

<style>
html,
body {
  margin: 0;
  background: #2a2a2a;
}
</style>

<style scoped>
.app {
  display: flex;
  width: 1893px;
  height: 909px;
  overflow: hidden;
  background: #2a2a2a;
  color: #fff;
  font-family: "Liberation Sans", Arial, sans-serif;
  font-size: 14px;
}
button {
  font-family: inherit;
  font-size: 14px;
  color: inherit;
  border: 0;
  padding: 0;
  background: none;
}
em {
  display: inline-block;
  flex: none;
}
.tri-d { width: 0; height: 0; border-left: 5px solid transparent; border-right: 5px solid transparent; border-top: 9px solid #8a8a8a; }
.tri-d.white { border-top-color: #fff; }
.tri-u { width: 0; height: 0; border-left: 4px solid transparent; border-right: 4px solid transparent; border-bottom: 8px solid #8a8a8a; }
.tri-l { width: 0; height: 0; border-top: 4px solid transparent; border-bottom: 4px solid transparent; border-right: 8px solid #808080; }
.tri-r { width: 0; height: 0; border-top: 4px solid transparent; border-bottom: 4px solid transparent; border-left: 8px solid #808080; }

/* sidebar */
.side {
  width: 463px;
  height: 909px;
  flex: none;
  display: flex;
  flex-direction: column;
  overflow: hidden;
}
.side-top {
  height: 41px;
  flex: none;
  background: #3c3c3c;
  display: flex;
  align-items: center;
  justify-content: space-between;
  padding: 0 17px 0 5px;
  box-sizing: border-box;
  color: #d0d0d0;
}
.burger { display: flex; flex-direction: column; gap: 5px; width: 20px; }
.burger i { height: 2px; background: #e6e6e6; }
.side-top-icons { display: flex; align-items: center; gap: 11px; }
.sound { color: #c8c8c8; width: 22px; position: relative; }
.sound::after {
  content: "";
  position: absolute;
  left: 16px;
  top: 6px;
  width: 5px;
  height: 8px;
  border-left: 2px solid #2e8b3d;
  border-right: 2px solid #2e8b3d;
  box-sizing: border-box;
}
.lang {
  border: 1px solid #c8c8c8;
  border-radius: 3px;
  font-size: 10px;
  font-weight: 700;
  padding: 1px 3px;
  letter-spacing: .5px;
  color: #c8c8c8;
}
.side-trade {
  height: 49px;
  background: #00924a;
  display: flex;
  align-items: center;
  font-size: 14px;
  flex: none;
  border-bottom: 1px solid #2f2f2f;
  box-sizing: content-box;
}
.side-ico { width: 58px; padding-left: 4px; box-sizing: border-box; display: flex; color: #fff; }
.market {
  height: 424px;
  overflow: hidden;
  flex: none;
  padding-top: 6px;
  box-sizing: border-box;
}
.market-tabs { display: flex; height: 28px; }
.mtab {
  flex: 1;
  display: flex;
  align-items: center;
  justify-content: center;
  background: #4d4d4d;
  color: #fff;
  font-size: 14px;
}
.mtab.active {
  background: #3c3c3c;
  border-bottom: 1px solid #00a550;
  border-left: 1px solid #2a2a2a;
  border-radius: 0 3px 3px 0;
  box-sizing: border-box;
}
.market-search {
  display: flex;
  align-items: center;
  margin-top: 6px;
  height: 24px;
  color: #c6c6c6;
}
.search-box {
  width: 298px;
  height: 24px;
  background: #1a1a1a;
  border-radius: 0 4px 4px 0;
  display: flex;
  align-items: center;
  justify-content: space-between;
  padding: 0 5px 0 3px;
  box-sizing: border-box;
  color: #707070;
}
.search-box svg { color: #c8c8c8; }
.bid { margin-left: 49px; }
.ask { margin-left: 52px; }
.market-list { display: flex; margin-top: 6px; }
.rows { width: 447px; display: flex; flex-direction: column; gap: 5.700px; }
.mrow {
  height: 36.800px;
  flex: none;
  background: #545454;
  border-radius: 0 3px 3px 0;
  display: flex;
  align-items: center;
  padding-left: 20px;
  gap: 11px;
  box-sizing: border-box;
}
.mrow .tri-r { border-left-color: #b0b0b0; }
.vscroll {
  width: 9px;
  margin-left: 7px;
  display: flex;
  flex-direction: column;
  align-items: center;
  padding-top: 8px;
  gap: 3px;
  flex: none;
  height: 340px;
  box-sizing: border-box;
}
.vscroll .thumb { width: 9px; flex: none; height: 265px; background: #808080; border-radius: 4px; }
.vscroll .tri-d { margin-top: 48px; border-left-width: 4px; border-right-width: 4px; border-top-width: 8px; }

.side-menu {
  flex: 1;
  min-height: 0;
  background: #3c3c3c;
  position: relative;
  display: flex;
  flex-direction: column;
}
.gm {
  height: 48px;
  margin-bottom: 2px;
  display: flex;
  align-items: center;
  flex: none;
}
.gm-ico {
  width: 40px;
  height: 48px;
  background: #00924a;
  display: flex;
  align-items: center;
  justify-content: center;
  margin-right: 18px;
  padding-right: 9px;
  box-sizing: border-box;
}
.side-div { height: 2px; background: #4a4a4a; margin-top: -2px; flex: none; }
.pm {
  height: 50px;
  display: flex;
  align-items: center;
  flex: none;
}
.pm:first-of-type { margin-top: -1px; }
.pm-ico {
  width: 58px;
  padding-left: 3px;
  box-sizing: border-box;
  display: flex;
}
.side-collapse {
  position: absolute;
  left: 433px;
  top: 186px;
  width: 23px;
  height: 24px;
  background: #545454;
  border-radius: 3px;
  display: flex;
  align-items: center;
  justify-content: center;
  color: #d8d8d8;
}

/* main area */
.main {
  flex: 1;
  display: flex;
  flex-direction: column;
  min-width: 0;
}
.toolbar {
  height: 44px;
  flex: none;
  display: flex;
  align-items: flex-start;
  padding: 5px 0 0 12px;
  box-sizing: border-box;
  color: #d6d6d6;
}
.new-order {
  width: 90px;
  height: 24px;
  flex: none;
  border: 1px solid #b0b0b0;
  border-radius: 4px;
  color: #d8d8d8;
  box-sizing: border-box;
}
.tool-strip { display: flex; margin-left: 8px; flex: none; }
.tb {
  width: 32.400px;
  height: 24px;
  box-sizing: border-box;
  display: flex;
  align-items: center;
  justify-content: center;
}
.tb.sep { border-left: 1px solid #4a4a4a; }
.tb-in {
  width: 24px;
  height: 24px;
  display: flex;
  align-items: center;
  justify-content: center;
  border-radius: 4px;
}
.tb-in.on { background: #3c3c3c; color: #fff; }
.tfs {
  display: flex;
  gap: 8.500px;
  border-left: 1px solid #4a4a4a;
  padding-left: 8px;
  height: 24px;
  align-items: flex-start;
  flex: none;
}
.tf {
  height: 25px;
  display: flex;
  flex-direction: column;
  box-sizing: border-box;
  padding-top: 1px;
  border-radius: 4px;
  color: #b8b8b8;
  font-size: 13px;
  flex: none;
}
.tf.on { background: #3c3c3c; color: #fff; }
.tf b { line-height: 12px; display: block; }
.tf .sub { font-size: 11.500px; text-align: right; margin-top: -3px; white-space: nowrap; }
.dots { font-size: 11px; line-height: 22px; color: #c8c8c8; }
.account {
  margin-left: auto;
  display: flex;
  align-items: center;
  white-space: pre;
  height: 24px;
  color: #f2f2f2;
  padding-right: 11px;
}
.account .demo { color: #1c8cf0; }
.dot {
  width: 6px;
  height: 6px;
  border-radius: 50%;
  background: #0d8a1f;
  display: inline-block;
  flex: none;
}
.account .dot { margin-right: 13px; }
.acc-tri { margin-left: 11px; }

.body {
  height: 833px;
  display: flex;
  flex: none;
}
.center {
  width: 930px;
  margin-left: 7px;
  flex: none;
  display: flex;
  flex-direction: column;
}
.workspace { display: flex; gap: 6px; height: 615px; flex: none; }
.charts {
  width: 890px;
  height: 615px;
  display: grid;
  grid-template-columns: 437px 446px;
  grid-template-rows: 198px 198px 205px;
  gap: 7px;
}
.chart-panel {
  background: #3c3c3c;
  border-radius: 4px;
  display: flex;
  flex-direction: column;
  padding: 0 0 0 5px;
  box-sizing: border-box;
  overflow: hidden;
}
.chart-panel.wide { grid-column: 1 / span 2; }
.chart-panel.half-r { padding-left: 7px; }
.chart-panel.active { background: #545454; }
.chart-head {
  height: 27px;
  flex: none;
  display: flex;
  align-items: center;
  color: #e8e8e8;
}
.chart-head .tri-d { border-left-width: 4px; border-right-width: 4px; border-top-width: 8px; }
.grip {
  width: 5px;
  height: 16px;
  margin-left: 2px;
  flex: none;
  background-image: radial-gradient(circle, #8f8f8f 1px, transparent 1px);
  background-size: 2.500px 2.500px;
}
.sym-ico {
  width: 16px;
  height: 16px;
  margin-left: 11px;
  background: #fff;
  display: flex;
  align-items: center;
  justify-content: center;
  font-size: 12px;
  font-weight: 700;
  flex: none;
}
.sym-ico.auto { background: #0b8cec; color: #fff; }
.sym-name { margin-left: 15px; width: 69px; flex: none; }
.half-l .sym-name, .half-r .sym-name { width: 66px; }
.head-sep { width: 1px; height: 15px; background: #666; margin: 0 6px 0 11px; flex: none; }
.head-tf { display: flex; width: 27.500px; font-size: 12px; height: 24px; flex: none; }
.head-tf b { line-height: 20px; }
.head-tf .sub { margin: 10px 0 0 7px; font-size: 12px; }
.head-right { margin-left: auto; display: flex; gap: 6px; padding-right: 8px; color: #c8c8c8; }
.plot { display: block; background: #000; flex: none; }
.grid { stroke: #242428; stroke-width: 1; shape-rendering: crispEdges; }
.session { stroke: #5a5a5a; stroke-width: 1; shape-rendering: crispEdges; }
.axis { stroke: #c4c4c4; stroke-width: 1; shape-rendering: crispEdges; }
.pline { fill: none; stroke: #d9501f; stroke-width: 1; }
.co rect { fill: #f35b25; }
.co line { stroke: #f35b25; stroke-width: 1; }
.cg rect { fill: #00924a; }
.cg line { stroke: #00924a; stroke-width: 1; }
.scatter circle { fill: #e8581f; }
.bid-line { stroke: #f35b25; stroke-width: 1; shape-rendering: crispEdges; }
.target-line { stroke: #0e7a2f; stroke-width: 1; stroke-dasharray: 9 3; shape-rendering: crispEdges; }
.ax { fill: #bdbdbd; font-size: 13.500px; letter-spacing: -.5px; }
.ruler { fill: none; stroke: #c0c0c0; stroke-width: 1; shape-rendering: crispEdges; }
.tag-text { fill: #2c1508; font-size: 14px; }
.q-text { fill: #d4d4d4; font-size: 14px; font-weight: 700; }
.q-arrow { fill: #d4d4d4; }
.bar-o { fill: #f35b25; }
.bar-g { fill: #00924a; }
.timer { fill: #000; stroke: #b4b4b4; stroke-width: 1; }
.timer-grip rect { fill: #bdbdbd; }
.chart-scroll {
  flex: 1;
  display: flex;
  align-items: center;
  padding: 0 8px 0 2px;
  gap: 3px;
}
.cs-track { flex: 1; display: flex; justify-content: flex-end; }
.cs-thumb { height: 9px; background: #808080; border-radius: 5px; display: block; }
.chart-scroll .tri-r { margin-right: 0; }

.draw-tools {
  width: 34px;
  height: 556px;
  flex: none;
  background: #545454;
  border-radius: 4px;
  display: flex;
  flex-direction: column;
  align-items: center;
  color: #d8d8d8;
  padding-top: 6px;
  box-sizing: border-box;
}
.tools-grip {
  width: 24px;
  height: 6px;
  flex: none;
  background-image: radial-gradient(circle, #9a9a9a 1px, transparent 1px);
  background-size: 3px 3px;
}
.cursor-tool {
  width: 23px;
  height: 24px;
  margin: 11px 0 3px;
  background: #2a2a2a;
  border-radius: 4px;
  display: flex;
  align-items: center;
  justify-content: center;
  color: #fff;
  flex: none;
}
.dtool {
  width: 23px;
  height: 31.600px;
  flex: none;
  box-sizing: border-box;
  display: flex;
  align-items: center;
  justify-content: center;
}
.dtool.sep { border-top: 1px solid #6e6e6e; }
.swatch { width: 23px; height: 23px; background: #c5b0dc; border-radius: 3px; }
.split-h {
  height: 6px;
  flex: none;
  display: flex;
  align-items: center;
  justify-content: center;
  gap: 4px;
  padding-right: 50px;
}
.split-h i { width: 6px; height: 3px; border-top: 1px solid #777; border-bottom: 1px solid #777; box-sizing: border-box; }
.split-h .tri-d { border-left-width: 4px; border-right-width: 4px; border-top-width: 4px; }

/* positions */
.bottom { height: 212px; flex: none; display: flex; flex-direction: column; }
.btabs { display: flex; gap: 6px; height: 33px; flex: none; }
.btab {
  display: flex;
  align-items: center;
  background: #3c3c3c;
  color: #c0c0c0;
  border-radius: 4px 4px 0 0;
  padding: 0 6px;
}
.btab.active { background: #545454; color: #fff; padding-left: 5px; }
.badge {
  width: 21px;
  height: 20px;
  margin-left: 6px;
  background: #808080;
  border-radius: 3px;
  color: #fff;
  display: flex;
  align-items: center;
  justify-content: center;
}
.feedback { margin-left: auto; padding: 0 0 0 7px; width: 97px; box-sizing: border-box; gap: 10px; }
.bpanel {
  flex: 1;
  background: #545454;
  border-radius: 0 0 4px 4px;
  padding: 6px 4px 0 5px;
  box-sizing: border-box;
  display: flex;
  flex-direction: column;
  min-height: 0;
}
.filters { display: flex; height: 24px; flex: none; gap: 6px; }
.f-search {
  width: 225px;
  background: #2a2a2a;
  border-radius: 4px;
  display: flex;
  align-items: center;
  justify-content: flex-end;
  padding-right: 4px;
  box-sizing: border-box;
  color: #d0d0d0;
}
.f-select {
  width: 188px;
  background: #2a2a2a;
  border-radius: 4px;
  display: flex;
  align-items: center;
  justify-content: space-between;
  padding: 0 4px 0 5px;
  box-sizing: border-box;
  color: #fff;
}
.f-select .tri-d { margin-top: -3px; border-left-width: 4px; border-right-width: 4px; border-top-width: 8px; }
.f-new {
  width: 105px;
  margin-left: 53px;
  background: #00924a;
  border-radius: 4px;
  display: flex;
  align-items: center;
  justify-content: center;
  gap: 9px;
  color: #fff;
}
.f-close {
  width: 137px;
  margin-left: 1px;
  display: flex;
  background: #2a7a4c;
  border-radius: 4px;
  overflow: hidden;
  color: #9fc4ae;
}
.f-close span { flex: 1; display: flex; align-items: center; justify-content: center; }
.f-close i {
  width: 25px;
  background: #00924a;
  border-left: 1px solid #1aa85e;
  box-sizing: border-box;
  display: flex;
  align-items: center;
  justify-content: center;
}
.table {
  height: 91px;
  margin-top: 6px;
  flex: none;
  background: #2a2a2a;
  border-radius: 4px;
}
.thead {
  display: flex;
  padding: 6px 0 0 96px;
  color: #777;
}
.thead span {
  width: 87.300px;
  height: 20px;
  display: flex;
  align-items: center;
  justify-content: center;
  border-right: 1px solid #484848;
  box-sizing: border-box;
  flex: none;
}
.thead span:last-child { border-right: 0; }
.summary {
  display: flex;
  align-items: center;
  height: 20px;
  margin-top: 11px;
  flex: none;
  color: #d0d0d0;
}
.sum-items {
  width: 878px;
  margin-left: 7px;
  overflow: hidden;
  display: flex;
  white-space: nowrap;
  flex: none;
  margin-right: 14px;
}
.sum {
  display: inline-flex;
  align-items: center;
  flex: none;
  padding-right: 12px;
  margin-right: 12px;
  border-right: 1px solid #6e6e6e;
  gap: 5px;
  height: 19px;
}
.sum:last-child { border-right: 0; }
.sum b { font-weight: 400; color: #fff; }
.hscroll {
  display: flex;
  align-items: center;
  gap: 3px;
  height: 9px;
  margin-top: 7px;
  padding: 0 32px 0 7px;
  flex: none;
}
.hs-track { flex: 1; display: block; }
.hs-thumb { display: block; width: 672px; height: 9px; background: #808080; border-radius: 5px; }

.split-v {
  width: 9px;
  flex: none;
  display: flex;
  flex-direction: column;
  align-items: center;
  justify-content: center;
  gap: 3px;
  height: 34px;
  margin-top: 288px;
}
.split-v i { width: 5px; height: 7px; border-left: 1px solid #777; border-right: 1px solid #777; box-sizing: border-box; }
.split-v .tri-r { border-top-width: 4px; border-bottom-width: 4px; border-left-width: 4px; }

/* right panel */
.right { width: 484px; flex: none; display: flex; flex-direction: column; margin-left: 0; }
.rtabs { display: flex; gap: 6px; height: 31px; flex: none; }
.rtab {
  display: flex;
  align-items: center;
  padding: 0 6px;
  background: #3c3c3c;
  color: #b8b8b8;
  border-radius: 4px 4px 0 0;
}
.rtab.active { background: #545454; color: #fff; }
.rpanel {
  flex: 1;
  min-height: 0;
  background: #545454;
  padding: 7px 0 5px 6px;
  display: flex;
  flex-direction: column;
  box-sizing: border-box;
}
.sym-bar { display: flex; height: 23px; flex: none; }
.sym-select {
  width: 230px;
  background: #232323;
  border-radius: 4px;
  display: flex;
  align-items: center;
  justify-content: space-between;
  padding: 0 4px 0 5px;
  box-sizing: border-box;
  font-size: 14px;
}
.sym-select .tri-d { margin-top: -3px; border-left-width: 4px; border-right-width: 4px; border-top-width: 8px; }
.sym-btns { display: flex; gap: 6px; margin-left: auto; padding-right: 5px; }
.sym-btns button {
  width: 24px;
  height: 24px;
  background: #6b6b6b;
  border-radius: 3px;
  display: flex;
  align-items: center;
  justify-content: center;
  color: #dcdcdc;
}
.rcontent { flex: 1; min-height: 0; display: flex; margin-top: 7px; }
.rcards {
  width: 458px;
  flex: none;
  background: #2a2a2a;
  border-radius: 4px;
  padding: 6px 7px 0 6px;
  box-sizing: border-box;
  overflow: hidden;
}
.rcontent .vscroll { margin-left: 6px; width: 10px; height: 755px; padding-top: 2px; }
.rcontent .vscroll .thumb { height: 121px; width: 9px; }
.rcontent .vscroll .tri-d { margin-top: 604px; }
.card {
  background: #545454;
  border-radius: 4px;
  padding: 0 6px 6px 7px;
}
.card-head {
  height: 37px;
  display: flex;
  align-items: center;
  justify-content: space-between;
  color: #c0c0c0;
}
.collapse {
  width: 24px;
  height: 23px;
  background: #6b6b6b;
  border-radius: 3px;
  display: flex;
  align-items: center;
  justify-content: center;
  color: #e4e4e4;
}
.order {
  background: #2d2d2d;
  border-radius: 4px;
  padding: 13px 13px 13px 12px;
  box-sizing: border-box;
  height: 445px;
}
.o-title { display: flex; align-items: center; height: 24px; }
.o-title svg { color: #1fa83a; }
.o-title > svg { margin-left: 3px; }
.o-name { margin-left: 9px; }
.o-change { margin-left: auto; color: #1fa83a; }
.o-share {
  width: 23px;
  height: 24px;
  margin-left: 13px;
  background: #4a4a4a;
  border-radius: 3px;
  display: flex;
  align-items: center;
  justify-content: center;
  color: #dcdcdc;
}
.o-share svg { color: #dcdcdc; }
.o-tabs {
  display: grid;
  grid-template-columns: 104px 91px 90px 1fr;
  gap: 1px;
  height: 28px;
  margin-top: 6px;
  background: #2d2d2d;
}
.o-tabs div {
  background: #4d4d4d;
  display: flex;
  align-items: center;
  justify-content: center;
}
.o-tabs div:first-child { border-radius: 4px 0 0 4px; }
.o-tabs div:last-child { border-radius: 0 4px 4px 0; }
.o-tabs .active {
  background: #3c3c3c;
  border-bottom: 1px solid #00a550;
  box-sizing: border-box;
}
.o-prices { display: flex; gap: 6px; height: 66px; margin-top: 12px; }
.pbox {
  background: #1c1c1c;
  border-radius: 5px;
  display: flex;
  flex-direction: column;
  align-items: center;
  box-sizing: border-box;
  padding-top: 8px;
}
.pbox span { line-height: 17px; }
.pbox strong { font-weight: 400; font-size: 21.500px; line-height: 26px; margin-top: 3px; }
.pbox small { font-size: 17px; }
.pbox.sell { width: 204px; color: #f35b1c; }
.pbox.buy { flex: 1; color: #1fa83a; border: 1px solid #1fa83a; padding-top: 7px; }
.o-bars { display: flex; gap: 6px; height: 6px; margin-top: 6px; }
.o-bars i { border-radius: 3px; display: block; }
.b-o { width: 277px; background: #f35b25; }
.b-g { flex: 1; background: #00924a; }
.o-spread { text-align: center; line-height: 20px; margin-top: 5px; }
.o-form { display: flex; margin-top: 14px; }
.col-l { width: 204px; padding-top: 5px; }
.col-l label { display: block; line-height: 16px; }
.col-l .qty-row { margin-top: 5px; }
.col-r { flex: 1; }
.qty-row { display: flex; align-items: center; gap: 7px; height: 24px; }
.qty {
  width: 146px;
  height: 23px;
  background: #1c1c1c;
  border-radius: 4px;
  display: flex;
  align-items: center;
  box-sizing: border-box;
  padding: 0 4px 0 5px;
}
.qty .tri-d { margin-left: auto; margin-top: -3px; border-left-width: 3px; border-right-width: 3px; border-top-width: 7px; }
.qty-val { margin-left: 12px; }
.spin { display: flex; flex-direction: column; width: 10px; height: 15px; position: relative; }
.spin::before, .spin::after { content: ""; width: 0; height: 0; border-left: 5px solid transparent; border-right: 5px solid transparent; }
.spin::before { border-bottom: 6px solid #8a8a8a; margin-bottom: 2px; }
.spin::after { border-top: 6px solid #8a8a8a; }
.pips {
  width: 144px;
  height: 24px;
  background: #333;
  border-radius: 4px;
  display: flex;
  align-items: center;
  justify-content: flex-end;
  padding-right: 2px;
  box-sizing: border-box;
}
.pips .spin::before { border-bottom-color: #555; }
.pips .spin::after { border-top-color: #555; }
.col-l p, .col-r p { margin: 0; line-height: 16px; }
.col-l p { margin-top: 8px; }
.col-r p { margin-top: 7px; }
.range { display: flex; align-items: center; height: 20px; margin-bottom: 5px; }
.cb { width: 19px; height: 19px; background: #1c1c1c; border-radius: 3px; flex: none; margin-right: 6px; }
.range .cb { width: 18px; margin-right: 7px; }
.info {
  width: 17px;
  height: 17px;
  margin-left: 9px;
  border: 1px solid #777;
  border-radius: 3px;
  display: flex;
  align-items: center;
  justify-content: center;
  color: #999;
  font-family: "Liberation Serif", serif;
  font-style: italic;
  font-size: 12px;
}
.o-checks { display: flex; margin-top: 28px; height: 19px; }
.chk { display: flex; align-items: center; }
.chk.tp { margin-left: 182px; }
.comment {
  height: 62px;
  margin-top: 22px;
  background: #1c1c1c;
  border-radius: 4px;
  padding: 6px;
  box-sizing: border-box;
  color: #707070;
  display: flex;
  flex-direction: column;
  justify-content: space-between;
}
.count { align-self: flex-end; }
.place {
  display: block;
  width: 100%;
  height: 23px;
  margin-top: 6px;
  background: #00924a;
  border-radius: 4px;
  color: #fff;
}
.card.dom { margin-top: 7px; padding-bottom: 0; height: 300px; }
.card.dom .card-head { justify-content: flex-start; }
.card.dom .grip { margin-left: 1px; height: 24px; width: 6px; }
.dom-title { margin-left: 6px; }
.dom .collapse { margin-left: auto; }
.dom-cols { display: flex; gap: 7px; height: 260px; margin-left: 1px; }
.dom-col {
  width: 212px;
  background: #2a2a2a;
  border-radius: 4px;
  padding-top: 6px;
  box-sizing: border-box;
  flex: none;
}
.dom-row {
  position: relative;
  height: 24px;
  margin: 0 6px 6px;
  display: flex;
  justify-content: space-between;
  align-items: center;
  padding: 0 6px;
  box-sizing: border-box;
}
.dom-row span { position: relative; }
.dom-row i {
  position: absolute;
  top: 0;
  bottom: 0;
  border-radius: 3px;
}
.dom-row.sell i { right: 0; background: #f35b25; }
.dom-row.buy i { left: 0; background: #00924a; }

/* status bar */
.status {
  height: 32px;
  flex: none;
  display: flex;
  align-items: center;
  padding-left: 6px;
}
.sessions { margin-left: 6px; color: #c0c0c0; }
.status-right {
  margin-left: auto;
  display: flex;
  align-items: center;
  padding-right: 6px;
}
.muted { color: #bcbcbc; }
.utc { display: flex; align-items: center; gap: 5px; margin-left: 12px; }
.utc .tri-d { margin-top: -3px; border-left-width: 3.500px; border-right-width: 3.500px; border-top-width: 8px; }
.clock { margin-left: 10px; padding-right: 6px; border-right: 1px solid #555; line-height: 16px; }
.on {
  display: flex;
  align-items: center;
  gap: 6px;
  padding: 0 13px;
  font-size: 12px;
  color: #dcdcdc;
  border-right: 1px solid #555;
  height: 16px;
}
.on i { width: 25px; height: 16px; background: #5c5c5c; border-radius: 4px; }
.ms { margin-left: 13px; word-spacing: 1.500px; }
</style>
